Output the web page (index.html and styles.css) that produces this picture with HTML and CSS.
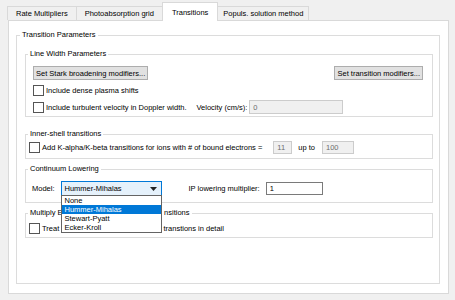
FILE: index.html
```html
<!DOCTYPE html>
<html lang="en">
<head>
    <meta charset="UTF-8">
    <meta name="viewport" content="width=device-width, initial-scale=1.0">
    <title>Transitions</title>
    <link rel="stylesheet" href="styles.css">
</head>
<body>

    <div class="tabs">
        <div class="tab">Rate Multipliers</div>
        <div class="tab">Photoabsorption grid</div>
        <div class="tab active">Transitions</div>
        <div class="tab last">Populs. solution method</div>
    </div>

    <div class="pane">
        <fieldset class="group outer">
            <legend>Transition Parameters</legend>
            <div class="outer-body">

                <fieldset class="group line-width">
                    <legend>Line Width Parameters</legend>
                    <div class="body">
                        <div class="row spread">
                            <button>Set Stark broadening modifiers...</button>
                            <button>Set transition modifiers...</button>
                        </div>
                        <div class="row check-row">
                            <input type="checkbox"><span>Include dense plasma shifts</span>
                        </div>
                        <div class="row field-row">
                            <input type="checkbox"><span>Include turbulent velocity in Doppler width.</span>
                            <span class="velocity-label">Velocity (cm/s):</span>
                            <input type="text" class="field velocity" value="0" disabled>
                        </div>
                    </div>
                </fieldset>

                <fieldset class="group inner-shell">
                    <legend>Inner-shell transitions</legend>
                    <div class="body">
                        <div class="row field-row">
                            <input type="checkbox"><span>Add K-alpha/K-beta transitions for ions with # of bound electrons =</span>
                            <input type="text" class="field small" value="11" disabled>
                            <span class="up-to">up to</span>
                            <input type="text" class="field medium" value="100" disabled>
                        </div>
                    </div>
                </fieldset>

                <fieldset class="group continuum">
                    <legend>Continuum Lowering</legend>
                    <div class="body">
                        <div class="row field-row">
                            <span>Model:</span>
                            <div class="combo">
                                <span>Hummer-Mihalas</span>
                                <svg width="7" height="4" viewBox="0 0 7 4"><polygon points="0,0 7,0 3.5,4" fill="#222"/></svg>
                                <ul class="combo-list">
                                    <li>None</li>
                                    <li class="selected">Hummer-Mihalas</li>
                                    <li>Stewart-Pyatt</li>
                                    <li>Ecker-Kroll</li>
                                </ul>
                            </div>
                            <span class="ip-label">IP lowering multiplier:</span>
                            <input type="text" class="field ip" value="1">
                        </div>
                    </div>
                </fieldset>

                <fieldset class="group multiply">
                    <legend>Multiply E<span class="covered">instein coefficients for inner tra</span>nsitions</legend>
                    <div class="body">
                        <div class="row check-row">
                            <input type="checkbox"><span>Treat<span class="covered"> all K-shell dielectronic satellite</span> transtions in detail</span>
                        </div>
                    </div>
                </fieldset>

            </div>
        </fieldset>
    </div>

</body>
</html>
```

FILE: styles.css
```css
body {
    margin: 0;
    background-color: #f0f0f0;
    font-family: "Liberation Sans", Arial, sans-serif;
    font-size: 7.5px;
    color: #000;
}

.tabs {
    display: flex;
    align-items: flex-end;
    height: 20px;
    padding-left: 7px;
}

.tab {
    box-sizing: border-box;
    height: 14px;
    padding: 0 8px;
    margin-right: -1px;
    border: 1px solid #d9d9d9;
    border-bottom: none;
    background-color: #f0f0f0;
    line-height: 13px;
}

.tab.active {
    position: relative;
    z-index: 1;
    height: 19px;
    margin-bottom: -1px;
    padding: 4px 9px 0;
    background-color: #fff;
    line-height: 12px;
}

.tab.last {
    padding: 0 5px;
}

.pane {
    box-sizing: border-box;
    display: flex;
    flex-direction: column;
    height: 274px;
    margin: 0 6px 0 8px;
    padding: 0 8px 9px 7px;
    border: 1px solid #d9d9d9;
    background-color: #fff;
}

.group {
    min-width: 0;
    margin: 0;
    padding: 0;
    border: 1px solid #dcdcdc;
}

.group legend {
    margin-left: 2px;
    padding: 0 2px;
    line-height: 8px;
}

.covered {
    visibility: hidden;
}

.outer {
    flex: 1;
    margin-top: 10px;
}

.outer > legend {
    margin-left: 3px;
}

.outer-body {
    padding: 0 6px 0 8px;
}

.row {
    display: flex;
    align-items: center;
}

.spread {
    justify-content: space-between;
}

.line-width { margin-top: 11px; }
.line-width .body { padding: 8px 9px 2px 7px; }
.line-width .check-row { height: 11px; margin-top: 5px; }
.line-width .field-row { height: 14px; margin-top: 4px; }

.inner-shell { margin-top: 13px; }
.inner-shell .body { padding: 3px 0 4px 3px; }
.inner-shell .field-row { height: 13px; }

.continuum { margin-top: 6px; }
.continuum .body { padding: 8px 0 6px 6px; }
.continuum .field-row { height: 15px; }

.multiply { margin-top: 6px; }
.multiply .body { padding: 6px 0 3px 3px; }
.multiply .check-row { height: 11px; }

button {
    box-sizing: border-box;
    height: 14px;
    padding: 0 2px;
    border: 1px solid #adadad;
    background-color: #e1e1e1;
    font-family: inherit;
    font-size: 7.5px;
    color: #000;
}

input[type="checkbox"] {
    appearance: none;
    box-sizing: border-box;
    width: 11px;
    height: 11px;
    margin: 0 2px 0 0;
    border: 1px solid #555;
    background-color: #fff;
}

.field {
    box-sizing: border-box;
    height: 13px;
    padding: 0 3px;
    border: 1px solid #cccccc;
    background-color: #f0f0f0;
    font-family: inherit;
    font-size: 7.5px;
    color: #6d6d6d;
}

.velocity-label { margin-left: 10px; }
.velocity { width: 94px; height: 14px; margin-left: 2px; }

.small { width: 19px; margin-left: 11px; }
.up-to { margin-left: 6px; }
.medium { width: 32px; margin-left: 7px; }

.combo {
    position: relative;
    box-sizing: border-box;
    display: flex;
    align-items: center;
    justify-content: space-between;
    width: 101px;
    height: 15px;
    margin-left: 6px;
    padding: 0 3px;
    border: 1px solid #0078d7;
    background-color: #e5f1fb;
}

.combo svg {
    margin-right: 1px;
}

.combo-list {
    position: absolute;
    top: 100%;
    left: -1px;
    right: -1px;
    margin: 0;
    padding: 0;
    list-style: none;
    border: 1px solid #646464;
    background-color: #fff;
    z-index: 2;
}

.combo-list li {
    height: 9px;
    padding-left: 3px;
    line-height: 9px;
}

.combo-list .selected {
    background-color: #0078d7;
    color: #fff;
}

.ip-label { margin-left: 27px; }

.ip {
    width: 57px;
    margin-left: 6px;
    border-color: #7a7a7a;
    background-color: #fff;
    color: #000;
}
```
